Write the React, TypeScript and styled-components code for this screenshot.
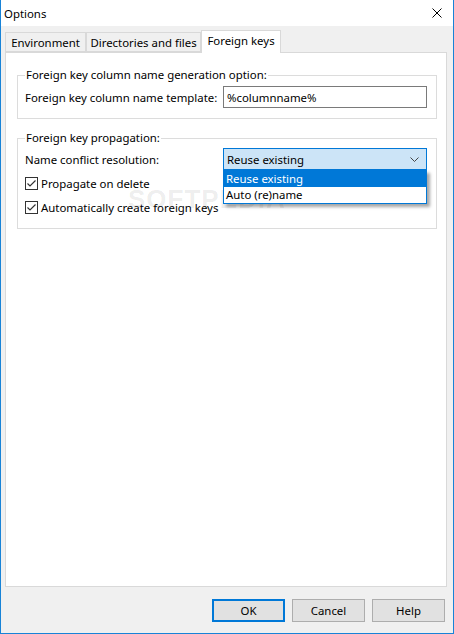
import React from 'react';
import styled, { createGlobalStyle } from 'styled-components';

const GlobalStyle = createGlobalStyle`
  html, body {
    margin: 0;
    padding: 0;
    background: #ffffff;
  }
  * {
    box-sizing: border-box;
  }
`;

const Window = styled.div`
  width: 454px;
  height: 634px;
  display: flex;
  flex-direction: column;
  background: #f0f0f0;
  border: 1px solid #1883d7;
  border-top: none;
  font-family: 'Noto Sans', 'Open Sans', sans-serif;
  font-size: 11.4px;
  color: #000;
`;

const TitleBar = styled.div`
  height: 26px;
  flex: none;
  display: flex;
  align-items: center;
  justify-content: space-between;
  background: #ffffff;
  padding: 0 11px 0 3px;
`;

const CloseIcon = () => (
  <svg width="10" height="10" viewBox="0 0 10 10">
    <path d="M0.5 0.5 L9.5 9.5 M9.5 0.5 L0.5 9.5" stroke="#000" strokeWidth="1" />
  </svg>
);

const Body = styled.div`
  flex: 1;
  display: flex;
  flex-direction: column;
  padding: 4px 6px 0 4px;
`;

const TabStrip = styled.div`
  display: flex;
  align-items: flex-end;
  height: 22px;
  position: relative;
  z-index: 1;
`;

const Tab = styled.div<{ $w: number; $active?: boolean }>`
  width: ${(p) => p.$w}px;
  height: ${(p) => (p.$active ? 23 : 20)}px;
  margin-bottom: ${(p) => (p.$active ? -1 : 0)}px;
  display: flex;
  align-items: center;
  justify-content: center;
  padding-bottom: ${(p) => (p.$active ? 3 : 0)}px;
  background: ${(p) => (p.$active ? '#ffffff' : '#f0f0f0')};
  border: 1px solid #d9d9d9;
  border-bottom: ${(p) => (p.$active ? 'none' : '1px solid #d9d9d9')};
  & + & {
    border-left: ${(p) => (p.$active ? '1px solid #d9d9d9' : 'none')};
  }
  white-space: nowrap;
`;

const Panel = styled.div`
  width: 442px;
  height: 535px;
  background: #ffffff;
  border: 1px solid #d9d9d9;
  padding: 14px 0 0 11px;
  display: flex;
  flex-direction: column;
  gap: 11px;
`;

const Group = styled.fieldset<{ $top?: number; $bottom?: number }>`
  width: 420px;
  margin: 0;
  padding: ${(p) => p.$top ?? 2}px 7px ${(p) => p.$bottom ?? 9}px 7px;
  border: 1px solid #dcdcdc;
  min-width: 0;
  display: flex;
  flex-direction: column;
  position: relative;
`;

const Legend = styled.legend`
  padding: 0 1px;
  line-height: 16px;
  height: 16px;
`;

const Watermark = styled.div`
  position: absolute;
  left: 110px;
  top: 38px;
  font-family: 'Liberation Sans', Arial, sans-serif;
  font-weight: bold;
  font-size: 26px;
  line-height: 30px;
  letter-spacing: 1px;
  color: rgba(0, 0, 0, 0.08);
  pointer-events: none;
  white-space: nowrap;
  sup {
    font-size: 10px;
    vertical-align: top;
  }
`;

const FieldRow = styled.div`
  display: flex;
  align-items: center;
  height: 22px;
  position: relative;
  z-index: 2;
`;

const FieldLabel = styled.span`
  width: 198px;
  flex: none;
  white-space: nowrap;
`;

const TextBox = styled.div`
  width: 204px;
  height: 22px;
  border: 1px solid #7a7a7a;
  background: #ffffff;
  padding-left: 3px;
  display: flex;
  align-items: center;
`;

const ComboBox = styled.div`
  width: 204px;
  height: 22px;
  border: 1px solid #0078d7;
  background: #cce4f7;
  padding: 0 7px 0 3px;
  display: flex;
  align-items: center;
  justify-content: space-between;
  position: relative;
`;

const Chevron = () => (
  <svg width="9" height="5" viewBox="0 0 9 5">
    <path d="M0.5 0.5 L4.5 4.5 L8.5 0.5" stroke="#444" strokeWidth="1" fill="none" />
  </svg>
);

const DropList = styled.div`
  position: absolute;
  left: -1px;
  top: 21px;
  width: 204px;
  border: 1px solid #0078d7;
  background: #ffffff;
  box-shadow: 3px 3px 3px rgba(0, 0, 0, 0.35);
  z-index: 5;
`;

const DropItem = styled.div<{ $selected?: boolean }>`
  height: 16px;
  line-height: 16px;
  padding-left: 2px;
  background: ${(p) => (p.$selected ? '#0078d7' : '#ffffff')};
  color: ${(p) => (p.$selected ? '#ffffff' : '#000000')};
`;

const CheckRow = styled.div<{ $top?: number }>`
  display: flex;
  align-items: center;
  height: 24px;
  gap: 3px;
  margin-top: ${(p) => p.$top ?? 0}px;
  position: relative;
`;

const CheckBox = styled.span`
  width: 13px;
  height: 13px;
  flex: none;
  border: 1px solid #333333;
  background: #ffffff;
  display: flex;
  align-items: center;
  justify-content: center;
`;

const Check = () => (
  <svg width="11" height="11" viewBox="0 0 11 11">
    <path d="M1.5 5.5 L4 8 L9.5 2.5" stroke="#333" strokeWidth="1.2" fill="none" />
  </svg>
);

const Footer = styled.div`
  flex: 1;
  display: flex;
  justify-content: flex-end;
  align-items: flex-start;
  gap: 7px;
  padding: 12px 2px 0 0;
`;

const Button = styled.button<{ $default?: boolean }>`
  width: 73px;
  height: 23px;
  font: inherit;
  color: #000;
  background: #e1e1e1;
  border: ${(p) => (p.$default ? '2px solid #0078d7' : '1px solid #adadad')};
  padding: 0;
`;

const App = () => (
  <>
    <GlobalStyle />
    <Window>
      <TitleBar>
        <span>Options</span>
        <CloseIcon />
      </TitleBar>
      <Body>
        <TabStrip>
          <Tab $w={81}>Environment</Tab>
          <Tab $w={115}>Directories and files</Tab>
          <Tab $w={80} $active>
            Foreign keys
          </Tab>
        </TabStrip>
        <Panel>
          <Group $top={3} $bottom={10}>
            <Legend>Foreign key column name generation option:</Legend>
            <FieldRow>
              <FieldLabel>Foreign key column name template:</FieldLabel>
              <TextBox>%columnname%</TextBox>
            </FieldRow>
          </Group>
          <Group $bottom={9}>
            <Legend>Foreign key propagation:</Legend>
            <Watermark>
              SOFTPEDIA<sup>®</sup>
            </Watermark>
            <FieldRow>
              <FieldLabel>Name conflict resolution:</FieldLabel>
              <ComboBox>
                <span>Reuse existing</span>
                <Chevron />
                <DropList>
                  <DropItem $selected>Reuse existing</DropItem>
                  <DropItem>Auto (re)name</DropItem>
                </DropList>
              </ComboBox>
            </FieldRow>
            <CheckRow $top={1}>
              <CheckBox>
                <Check />
              </CheckBox>
              <span>Propagate on delete</span>
            </CheckRow>
            <CheckRow>
              <CheckBox>
                <Check />
              </CheckBox>
              <span>Automatically create foreign keys</span>
            </CheckRow>
          </Group>
        </Panel>
        <Footer>
          <Button $default>OK</Button>
          <Button>Cancel</Button>
          <Button>Help</Button>
        </Footer>
      </Body>
    </Window>
  </>
);

export default App;
